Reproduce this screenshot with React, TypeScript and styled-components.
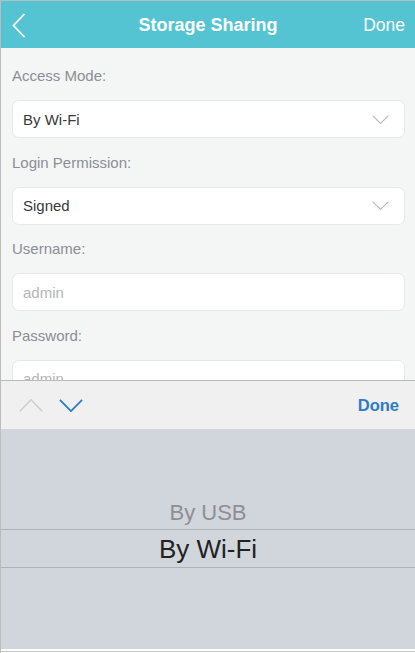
import React from 'react';
import styled, { createGlobalStyle } from 'styled-components';

const GlobalStyle = createGlobalStyle`
  html, body {
    margin: 0;
    padding: 0;
    background: #ffffff;
  }
  body {
    font-family: 'Liberation Sans', Arial, Helvetica, sans-serif;
  }
`;

const Screen = styled.div`
  width: 415px;
  height: 653px;
  box-sizing: border-box;
  border-top: 1px solid #bcbcbc;
  border-left: 1px solid #bcbcbc;
  display: flex;
  flex-direction: column;
  overflow: hidden;
  background: #ffffff;
`;

const Header = styled.div`
  height: 47px;
  flex-shrink: 0;
  box-sizing: border-box;
  background: #54c4d2;
  display: flex;
  align-items: center;
  justify-content: space-between;
  padding: 2px 10px 0 11px;
  position: relative;
  color: #ffffff;
`;

const Title = styled.div`
  position: absolute;
  left: 0;
  right: 0;
  top: 14px;
  text-align: center;
  font-size: 18px;
  font-weight: bold;
  pointer-events: none;
`;

const HeaderButton = styled.div`
  font-size: 17.5px;
  display: flex;
  align-items: center;
`;

const Content = styled.div`
  height: 332px;
  flex-shrink: 0;
  overflow: hidden;
  background: #f4f5f5;
  padding: 19px 10px 0 11px;
  box-sizing: border-box;
  display: flex;
  flex-direction: column;
  gap: 15.5px;
`;

const Field = styled.div`
  display: flex;
  flex-direction: column;
  gap: 15px;
`;

const Label = styled.div`
  font-size: 15px;
  line-height: 18px;
  color: #8a8f96;
`;

const Box = styled.div<{ $placeholder?: boolean }>`
  height: 38px;
  flex-shrink: 0;
  box-sizing: border-box;
  background: #ffffff;
  border: 1px solid #e6e8e9;
  border-radius: 7px;
  display: flex;
  align-items: center;
  justify-content: space-between;
  padding: 0 15px 0 10px;
  font-size: 15px;
  color: ${(p) => (p.$placeholder ? '#b4b6b8' : '#3a3a3a')};
`;

const Toolbar = styled.div`
  height: 49px;
  flex-shrink: 0;
  box-sizing: border-box;
  border-top: 1px solid #bababa;
  background: #f0f0f0;
  display: flex;
  align-items: center;
  padding: 0 16px 0 18px;
`;

const ArrowGroup = styled.div`
  display: flex;
  gap: 16px;
  flex: 1;
`;

const ToolbarDone = styled.div`
  font-size: 16.5px;
  font-weight: bold;
  color: #2e7bc9;
`;

const Picker = styled.div`
  height: 220px;
  flex-shrink: 0;
  background: #d1d5dc;
  padding-top: 68px;
  box-sizing: border-box;
  display: flex;
  flex-direction: column;
`;

const PickerOption = styled.div`
  height: 32px;
  display: flex;
  align-items: center;
  justify-content: center;
  font-size: 22px;
  color: #8e8f93;
`;

const PickerSelected = styled.div`
  height: 39px;
  box-sizing: border-box;
  border-top: 1px solid #aeb1b6;
  border-bottom: 1px solid #aeb1b6;
  display: flex;
  align-items: center;
  justify-content: center;
  padding-top: 2px;
  font-size: 26px;
  color: #222222;
`;

const Footer = styled.div`
  height: 4px;
  flex-shrink: 0;
  box-sizing: border-box;
  border-top: 2px solid #ffffff;
  border-bottom: 1px solid #ffffff;
  background: #c8c8c8;
`;

const Chevron = ({ dir, color, w, h, sw }: { dir: 'up' | 'down'; color: string; w: number; h: number; sw: number }) => (
  <svg width={w} height={h} viewBox={`0 0 ${w} ${h}`} fill="none">
    <polyline
      points={
        dir === 'down'
          ? `${sw / 2},${sw / 2} ${w / 2},${h - sw / 2} ${w - sw / 2},${sw / 2}`
          : `${sw / 2},${h - sw / 2} ${w / 2},${sw / 2} ${w - sw / 2},${h - sw / 2}`
      }
      stroke={color}
      strokeWidth={sw}
    />
  </svg>
);

const BackIcon = () => (
  <svg width="14" height="25" viewBox="0 0 14 25" fill="none">
    <polyline points="12.5,1 1.5,12.5 12.5,24" stroke="#ffffff" strokeWidth="1.8" />
  </svg>
);

const fields = [
  { label: 'Access Mode:', value: 'By Wi-Fi', select: true },
  { label: 'Login Permission:', value: 'Signed', select: true },
  { label: 'Username:', value: 'admin', select: false },
  { label: 'Password:', value: 'admin', select: false },
];

export default function App() {
  return (
    <>
      <GlobalStyle />
      <Screen>
        <Header>
          <HeaderButton>
            <BackIcon />
          </HeaderButton>
          <Title>Storage Sharing</Title>
          <HeaderButton>Done</HeaderButton>
        </Header>
        <Content>
          {fields.map((f) => (
            <Field key={f.label}>
              <Label>{f.label}</Label>
              <Box $placeholder={!f.select}>
                <span>{f.value}</span>
                {f.select && <Chevron dir="down" color="#b9bbbd" w={17} h={9} sw={1.2} />}
              </Box>
            </Field>
          ))}
        </Content>
        <Toolbar>
          <ArrowGroup>
            <Chevron dir="up" color="#cdcdcd" w={24} h={13} sw={1.6} />
            <Chevron dir="down" color="#2e7bc9" w={24} h={13} sw={1.8} />
          </ArrowGroup>
          <ToolbarDone>Done</ToolbarDone>
        </Toolbar>
        <Picker>
          <PickerOption>By USB</PickerOption>
          <PickerSelected>By Wi-Fi</PickerSelected>
        </Picker>
        <Footer />
      </Screen>
    </>
  );
}
